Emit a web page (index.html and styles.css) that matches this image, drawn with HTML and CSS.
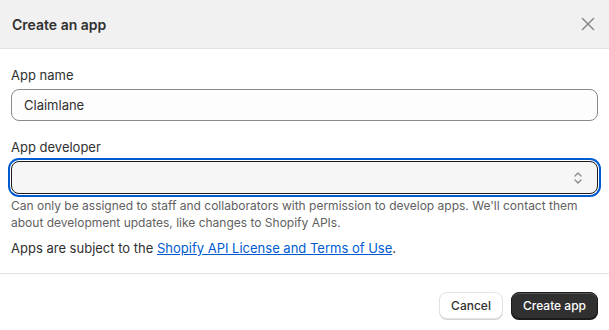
FILE: index.html
```html
<!DOCTYPE html>
<html lang="en">
<head>
	<meta charset="UTF-8">
	<title>Create an app</title>
	<link rel="stylesheet" href="styles.css">
</head>
<body>
<div class="modal">
	<div class="modal-header">
		<h2 class="modal-title">Create an app</h2>
		<button type="button" class="close" aria-label="Close">
			<svg width="14" height="14" viewBox="0 0 14 14"><path d="M1.5 1.5l11 11M12.5 1.5l-11 11" stroke="#8a8a8a" stroke-width="1.5" stroke-linecap="round"/></svg>
		</button>
	</div>

	<div class="modal-body">
		<div class="field">
			<label for="appName" class="label">App name</label>
			<input id="appName" class="text-input" type="text" value="Claimlane">
		</div>

		<div class="field field-last">
			<label for="appDev" class="label">App developer</label>
			<div class="select">
				<span class="select-value"></span>
				<svg class="select-icon" width="10" height="16" viewBox="0 0 10 16"><path d="M2 6l3-3 3 3M2 10l3 3 3-3" fill="none" stroke="#8a8a8a" stroke-width="1.4" stroke-linecap="round" stroke-linejoin="round"/></svg>
			</div>
			<p class="help">Can only be assigned to staff and collaborators with permission to develop apps. We'll contact them about development updates, like changes to Shopify APIs.</p>
		</div>

		<p class="terms">Apps are subject to the <a href="#">Shopify API License and Terms of Use</a>.</p>
	</div>

	<div class="modal-footer">
		<button type="button" class="btn">Cancel</button>
		<button type="button" class="btn btn-primary">Create app</button>
	</div>
</div>
</body>
</html>
```

FILE: styles.css
```css
body{
	margin: 0;
	font-family: Inter, "Noto Sans", sans-serif;
	font-size: 13px;
	color: #303030;
	background: #fff;
}

.modal-header{
	display: flex;
	align-items: center;
	justify-content: space-between;
	height: 48px;
	padding: 0 12px;
	background: #f1f1f1;
	border-bottom: 1px solid #e3e3e3;
}

.modal-title{
	margin: 0;
	font-size: 14px;
	font-weight: 600;
	color: #303030;
}

.close{
	display: flex;
	border: none;
	background: none;
	padding: 0;
	margin-right: 2px;
}

.modal-body{
	padding: 16px 11px 15px 11px;
	border-bottom: 1px solid #e3e3e3;
}

.field{
	margin-bottom: 16px;
}

.field-last{
	margin-bottom: 7px;
}

.label{
	display: block;
	line-height: 20px;
	margin-bottom: 4px;
}

.text-input{
	box-sizing: border-box;
	width: 100%;
	height: 32px;
	padding: 0 12px;
	border: 1px solid #8a8a8a;
	border-radius: 8px;
	background: #fdfdfd;
	font-family: inherit;
	font-size: 13px;
	color: #303030;
}

.select{
	box-sizing: border-box;
	display: flex;
	align-items: center;
	justify-content: space-between;
	height: 33px;
	padding: 0 14px 0 12px;
	border: 1px solid #1a1a1a;
	border-radius: 8px;
	background: #f6f6f6;
	box-shadow: 0 0 0 1px #fff, 0 0 0 3px #005bd3;
}

.help{
	margin: 3px 0 0;
	font-size: 12px;
	line-height: 17px;
	color: #616161;
}

.terms{
	margin: 0;
	line-height: 20px;
}

.terms a{
	color: #005bd3;
}

.modal-footer{
	display: flex;
	justify-content: flex-end;
	gap: 8px;
	padding: 18px 11px;
}

.btn{
	height: 27px;
	padding: 0 11px;
	border: 1px solid #e3e3e3;
	border-radius: 8px;
	background: #fff;
	font-family: inherit;
	font-size: 12px;
	font-weight: 500;
	color: #303030;
	box-shadow: 0 1px 0 #d4d4d4;
}

.btn-primary{
	background: #303030;
	border-color: #1a1a1a;
	color: #fff;
	box-shadow: inset 0 1px 0 #555, 0 1px 0 #1a1a1a;
}
```
